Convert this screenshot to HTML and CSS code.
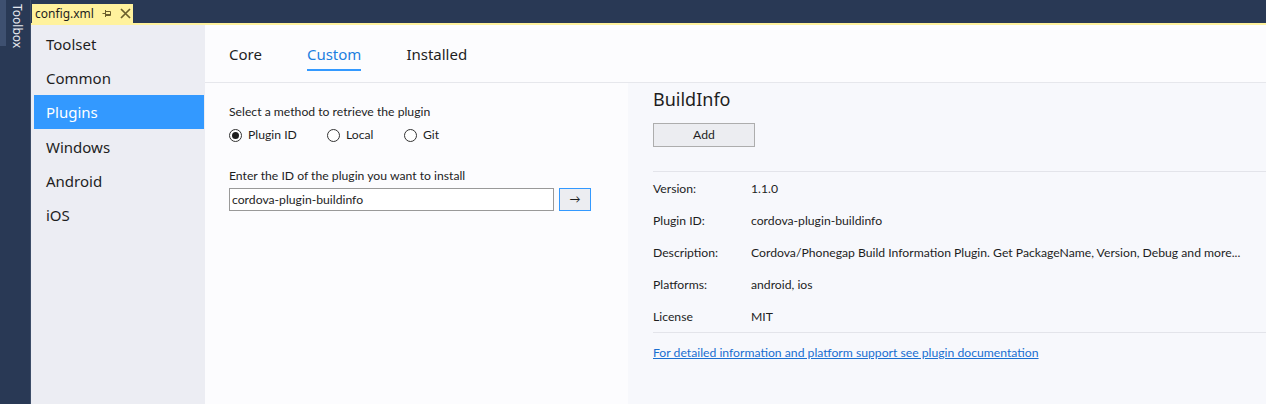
FILE: index.html
```html
<!DOCTYPE html>
<html>
<head>
<meta charset="utf-8">
<link rel="stylesheet" href="styles.css">
</head>
<body>
<div class="toolstrip">
  <div class="toolbox-tab"><span class="toolbox-label">Toolbox</span></div>
</div>
<div class="doc">
  <div class="tabbar">
    <div class="doctab">
      <span class="doctab-name">config.xml</span>
      <svg class="pin" width="10" height="9" viewBox="0 0 10 9"><path d="M0.5 4.5h3M3.5 1v7M3.5 2.5h5v4h-5M3.5 5.5h5" fill="none" stroke="#6b5f2c" stroke-width="1"/></svg>
      <svg class="close" width="11" height="11" viewBox="0 0 11 11"><path d="M1 1L10 10M10 1L1 10" stroke="#6b5f2c" stroke-width="1.7"/></svg>
    </div>
  </div>
  <div class="tab-accent"></div>
  <div class="doc-body">
    <nav class="sidebar">
      <div class="nav-item">Toolset</div>
      <div class="nav-item">Common</div>
      <div class="nav-item selected">Plugins</div>
      <div class="nav-item">Windows</div>
      <div class="nav-item">Android</div>
      <div class="nav-item">iOS</div>
    </nav>
    <main class="main">
      <div class="tabs">
        <div class="tab">Core</div>
        <div class="tab active">Custom</div>
        <div class="tab">Installed</div>
      </div>
      <div class="content">
        <section class="left">
          <div class="label">Select a method to retrieve the plugin</div>
          <div class="radios">
            <label class="radio r-id"><span class="circle checked"></span>Plugin ID</label>
            <label class="radio r-local"><span class="circle"></span>Local</label>
            <label class="radio"><span class="circle"></span>Git</label>
          </div>
          <div class="label label-id">Enter the ID of the plugin you want to install</div>
          <div class="input-row">
            <div class="input">cordova-plugin-buildinfo</div>
            <div class="go">→</div>
          </div>
        </section>
        <section class="right">
          <h1 class="title">BuildInfo</h1>
          <div class="add-btn">Add</div>
          <div class="sep sep-top"></div>
          <div class="info">
            <div class="row"><span class="key">Version:</span><span class="val">1.1.0</span></div>
            <div class="row"><span class="key">Plugin ID:</span><span class="val">cordova-plugin-buildinfo</span></div>
            <div class="row"><span class="key">Description:</span><span class="val">Cordova/Phonegap Build Information Plugin. Get PackageName, Version, Debug and more...</span></div>
            <div class="row"><span class="key">Platforms:</span><span class="val">android, ios</span></div>
            <div class="row"><span class="key">License</span><span class="val">MIT</span></div>
          </div>
          <div class="sep"></div>
          <a class="doc-link" href="#">For detailed information and platform support see plugin documentation</a>
        </section>
      </div>
    </main>
  </div>
</div>
</body>
</html>
```
FILE: styles.css
```css
* { box-sizing: border-box; }
html, body {
  margin: 0;
  width: 1266px;
  height: 404px;
  overflow: hidden;
}
body {
  display: flex;
  font-family: "Lato", "Noto Sans", sans-serif;
  font-size: 12.2px;
  color: #1e1e1e;
  background: #293955;
}
.toolstrip {
  width: 31px;
  flex: none;
  background: #293955;
  border-right: 1px solid #3d4d68;
}
.toolbox-tab {
  height: 46px;
  display: flex;
  border-left: 6px solid #3e5070;
}
.toolbox-label {
  writing-mode: vertical-rl;
  color: #e6e9ef;
  font-family: "Noto Sans", sans-serif;
  font-size: 12px;
  line-height: 12px;
  padding: 4px 0 0 5px;
}
.doc {
  flex: 1;
  display: flex;
  flex-direction: column;
}
.tabbar {
  height: 23px;
  padding: 4px 0 0 1px;
  background: #293955;
  display: flex;
}
.doctab {
  width: 101px;
  height: 19px;
  background: #fff29d;
  display: flex;
  align-items: center;
  padding-left: 3px;
}
.doctab-name {
  font-family: "Noto Sans", sans-serif;
  font-size: 12px;
  color: #1e1e1e;
  width: 66px;
}
.pin { margin-left: 1px; }
.close { margin-left: 8px; }
.tab-accent {
  height: 2px;
  background: #fff29d;
}
.doc-body {
  flex: 1;
  display: flex;
}
.sidebar {
  width: 174px;
  flex: none;
  background: #ecedf3;
  padding: 2px 1px 0 3px;
}
.nav-item {
  height: 34px;
  line-height: 34px;
  padding-left: 12px;
  font-family: "Noto Sans", sans-serif;
  font-size: 15px;
  color: #1e1e1e;
}
.nav-item.selected {
  background: #3399ff;
  color: #ffffff;
  margin-bottom: 1px;
}
.main {
  flex: 1;
  display: flex;
  flex-direction: column;
  background: #fcfcfe;
}
.tabs {
  display: flex;
  gap: 45px;
  padding: 19px 0 0 24px;
  height: 58px;
  border-bottom: 1px solid #e6e7ec;
  font-family: "Noto Sans", sans-serif;
}
.tab {
  font-size: 15px;
  line-height: 20px;
  height: 27px;
  color: #1e1e1e;
}
.tab.active {
  color: #1c7fe0;
  border-bottom: 2px solid #3399ff;
}
.content {
  flex: 1;
  display: flex;
}
.left {
  width: 423px;
  flex: none;
  padding: 21px 24px 0 24px;
}
.label {
  line-height: 16px;
}
.radios {
  display: flex;
  margin-top: 7px;
  line-height: 16px;
}
.radio {
  display: flex;
  align-items: center;
  gap: 6px;
}
.r-id { width: 98px; }
.r-local { width: 77px; }
.circle {
  width: 13px;
  height: 13px;
  border: 1px solid #333;
  border-radius: 50%;
  background: #fff;
  display: flex;
  align-items: center;
  justify-content: center;
}
.circle.checked::after {
  content: "";
  width: 7px;
  height: 7px;
  border-radius: 50%;
  background: #1e1e1e;
}
.label-id {
  margin-top: 25px;
}
.input-row {
  display: flex;
  gap: 5px;
  margin-top: 4px;
}
.input {
  width: 325px;
  height: 23px;
  border: 1px solid #999;
  background: #fff;
  line-height: 21px;
  padding-left: 2px;
}
.go {
  width: 32px;
  height: 23px;
  border: 1px solid #3399ff;
  background: #ecedf1;
  text-align: center;
  line-height: 20px;
  font-size: 11px;
}
.right {
  flex: 1;
  background: #f7f8fc;
  padding-top: 3px;
  padding-left: 25px;
}
.title {
  margin: 0;
  font-family: "Noto Sans", sans-serif;
  font-size: 18px;
  line-height: 26px;
  font-weight: normal;
  color: #1e1e1e;
}
.add-btn {
  margin-top: 11px;
  width: 102px;
  height: 24px;
  background: #ecedf1;
  border: 1px solid #adadad;
  text-align: center;
  line-height: 22px;
}
.sep {
  height: 1px;
  background: #e3e4ea;
}
.sep-top {
  margin-top: 24px;
}
.row {
  height: 32px;
  display: flex;
  align-items: center;
}
.key {
  width: 98px;
  flex: none;
}
.val {
  white-space: nowrap;
}
.doc-link {
  display: block;
  margin-top: 12px;
  line-height: 16px;
  color: #1a6fd1;
  text-decoration: underline;
}
```
